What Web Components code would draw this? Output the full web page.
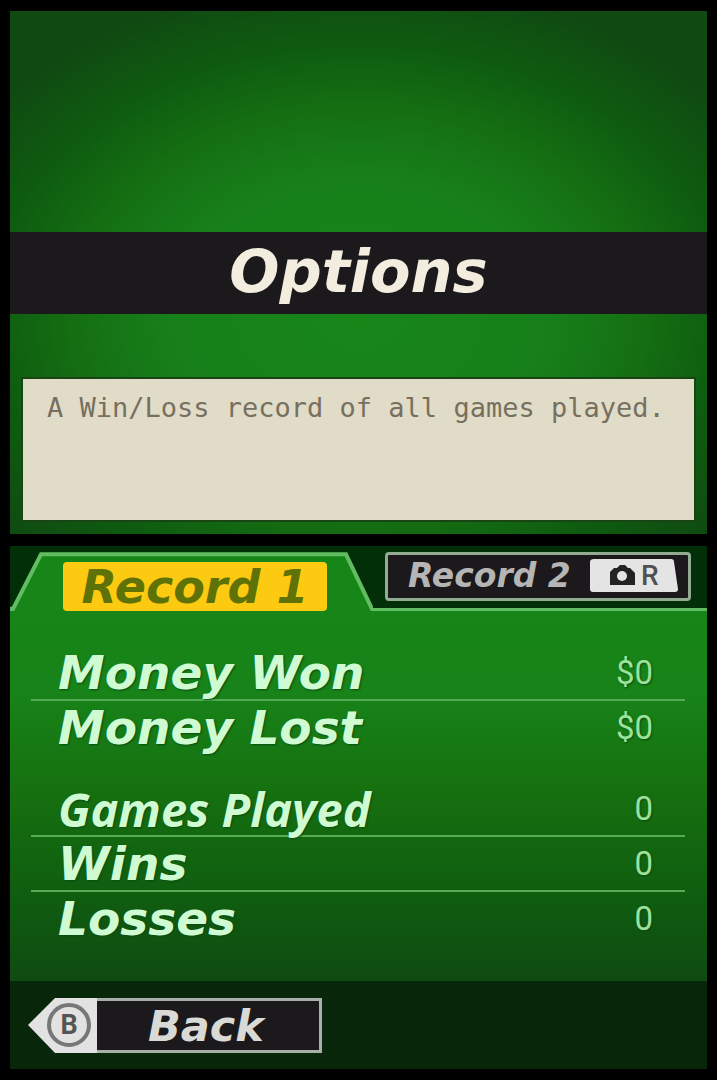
<!DOCTYPE html>
<html lang="en">
<head>
<meta charset="utf-8">
<meta name="viewport" content="width=device-width, initial-scale=1">
<title>Options</title>
<style>
    body {
        margin: 0;
        background: #000;
        font-family: "DejaVu Sans", Verdana, sans-serif;
    }
</style>
</head>
<body>

<dual-screen>
    <info-screen slot="top" heading="Options">A Win/Loss record of all games played.</info-screen>
    <record-screen slot="bottom">
        <record-tab slot="tabs" active>Record 1</record-tab>
        <record-tab slot="tabs">Record 2</record-tab>
        <score-table>
            <score-entry label="Money Won" value="$0"></score-entry>
            <score-entry label="Money Lost" value="$0"></score-entry>
        </score-table>
        <score-table>
            <score-entry label="Games Played" value="0" narrow></score-entry>
            <score-entry label="Wins" value="0"></score-entry>
            <score-entry label="Losses" value="0"></score-entry>
        </score-table>
        <back-button slot="footer">Back</back-button>
    </record-screen>
</dual-screen>

<script>
class DualScreen extends HTMLElement {
    constructor() {
        super();
        const shadowRoot = this.attachShadow({ mode: 'open' });
        shadowRoot.innerHTML = `
            <style>
                :host {
                    display: grid;
                    grid-template-rows: 1fr 1fr;
                    gap: 12px;
                    box-sizing: border-box;
                    min-height: 100vh;
                    padding: 11px 10px;
                }
            </style>
            <slot name="top"></slot>
            <slot name="bottom"></slot>
            `;
    }
}

class InfoScreen extends HTMLElement {
    constructor() {
        super();
        const shadowRoot = this.attachShadow({ mode: 'open' });
        shadowRoot.innerHTML = `
            <style>
                :host {
                    display: flex;
                    flex-direction: column;
                    justify-content: flex-end;
                    background: radial-gradient(ellipse 60% 58% at 50% 58%,
                        #178619 0%, #17801a 45%, #156f12 68%, #0e5c10 88%, #104a12 110%);
                }
                h1 {
                    margin: 0 0 65px;
                    padding: 2px 0 4px;
                    background: #1b191b;
                    color: #f3eddf;
                    font-size: 59px;
                    font-style: italic;
                    line-height: 76px;
                    text-align: center;
                }
                p {
                    min-height: 125px;
                    margin: 0 13px 14px;
                    padding: 13px 8px 3px 24px;
                    background: #e1dcc8;
                    outline: 2px solid #194514;
                    color: #77705f;
                    font-family: "DejaVu Sans Mono", monospace;
                    font-size: 27px;
                    line-height: 32px;
                }
            </style>
            <h1></h1>
            <p><slot></slot></p>
            `;
    }

    connectedCallback() {
        this.shadowRoot.querySelector('h1').textContent = this.getAttribute('heading');
    }
}

class RecordScreen extends HTMLElement {
    constructor() {
        super();
        const shadowRoot = this.attachShadow({ mode: 'open' });
        shadowRoot.innerHTML = `
            <style>
                :host {
                    display: flex;
                    flex-direction: column;
                    background: linear-gradient(#178618 0, #178318 28%, #16700f 47%, #0f5c10 68%, #104a12 84%);
                }
                nav {
                    display: grid;
                    grid-template-columns: 363fr 334fr;
                    height: 63px;
                    background: #022f08;
                }
                main {
                    display: flex;
                    flex: 1;
                    flex-direction: column;
                    gap: 28px;
                    padding: 37px 22px 31px 21px;
                }
                footer {
                    padding: 17px 18px 16px;
                    background: #08260a;
                }
            </style>
            <nav><slot name="tabs"></slot></nav>
            <main><slot></slot></main>
            <footer><slot name="footer"></slot></footer>
            `;
    }
}

class RecordTab extends HTMLElement {
    constructor() {
        super();
        const shadowRoot = this.attachShadow({ mode: 'open' });
        shadowRoot.innerHTML = `
            <style>
                :host {
                    display: flex;
                    position: relative;
                    box-sizing: border-box;
                    align-items: flex-start;
                    padding: 6px 16px 0 12px;
                    border-bottom: 3px solid #62bd62;
                }
                :host([active]) {
                    padding: 16px 46px 0 53px;
                    border-bottom: 0;
                }
                .outline {
                    display: none;
                    position: absolute;
                    inset: 0;
                    width: 100%;
                    height: 100%;
                }
                :host([active]) .outline {
                    display: block;
                }
                button {
                    display: flex;
                    position: relative;
                    flex: 1;
                    box-sizing: border-box;
                    align-items: center;
                    justify-content: space-between;
                    height: 49px;
                    padding: 0 10px 2px 20px;
                    border: 3px solid #91ac93;
                    border-radius: 4px;
                    background: #1b191b;
                    color: #b5b5b5;
                    font: italic bold 33px "DejaVu Sans", Verdana, sans-serif;
                    white-space: nowrap;
                }
                :host([active]) button {
                    justify-content: center;
                    padding: 0;
                    border: 0;
                    background: #fdca12;
                    color: #5f7206;
                    font-size: 46px;
                }
                .key {
                    width: 88px;
                    height: 33px;
                }
                :host([active]) .key {
                    display: none;
                }
            </style>
            <svg class="outline" viewBox="0 0 363 63" preserveAspectRatio="none" aria-hidden="true">
                <path d="M0 63V61H3L31 8H336L362 61H363V63Z" fill="#178618"/>
                <path d="M0 61H3L31 8H336L362 61H363" fill="none" stroke="#62bd62" stroke-width="4"/>
            </svg>
            <button type="button">
                <slot></slot>
                <svg class="key" viewBox="0 0 88 33" aria-hidden="true">
                    <path d="M4 0H81Q84 0 84 3L88 30Q88 33 85 33H3Q0 33 0 30V3Q0 0 4 0Z" fill="#e4e4e4"/>
                    <path d="M20 26V13L24 9H27L30 6H35L38 9H40L45 14V26Z" fill="#222"/>
                    <circle cx="32" cy="17" r="5" fill="#e4e4e4"/>
                    <text x="51" y="26" fill="#505050" font-family="Roboto, sans-serif" font-size="28" font-style="normal" font-weight="500">R</text>
                </svg>
            </button>
            `;
    }
}

class ScoreTable extends HTMLElement {
    constructor() {
        super();
        const shadowRoot = this.attachShadow({ mode: 'open' });
        shadowRoot.innerHTML = `
            <style>
                :host {
                    display: block;
                }
                table {
                    width: 100%;
                    border-collapse: collapse;
                }
                tr + tr {
                    border-top: 2px solid #55ac55;
                }
                th, td {
                    height: 53px;
                    padding: 0;
                    line-height: 48px;
                    text-shadow: 1px 1px 2px #0b4a12;
                }
                th {
                    padding-left: 27px;
                    color: #cffbd2;
                    font-size: 47px;
                    font-style: italic;
                    text-align: left;
                }
                th.narrow {
                    font-family: "Open Sans", "Noto Sans", sans-serif;
                }
                td {
                    padding-right: 32px;
                    color: #9be29b;
                    font-family: Roboto, sans-serif;
                    font-size: 33px;
                    text-align: right;
                }
            </style>
            <table><tbody></tbody></table>
            `;
    }

    connectedCallback() {
        const body = this.shadowRoot.querySelector('tbody');
        body.textContent = '';
        this.querySelectorAll('score-entry').forEach((entry) => {
            const row = body.insertRow();
            const label = document.createElement('th');
            label.scope = 'row';
            label.textContent = entry.getAttribute('label');
            label.classList.toggle('narrow', entry.hasAttribute('narrow'));
            row.append(label);
            row.insertCell().textContent = entry.getAttribute('value');
        });
    }
}

class BackButton extends HTMLElement {
    constructor() {
        super();
        const shadowRoot = this.attachShadow({ mode: 'open' });
        shadowRoot.innerHTML = `
            <style>
                :host {
                    display: flex;
                }
                button {
                    display: flex;
                    padding: 0;
                    border: 0;
                    background: none;
                    color: #d9d9d6;
                    font: italic bold 43px "DejaVu Sans", Verdana, sans-serif;
                }
                svg {
                    width: 69px;
                    height: 55px;
                }
                .label {
                    box-sizing: border-box;
                    width: 225px;
                    height: 55px;
                    padding-right: 4px;
                    border: 3px solid #a9b0a9;
                    border-left: 0;
                    background: #1b191b;
                    line-height: 50px;
                    text-align: center;
                }
            </style>
            <button type="button">
                <svg viewBox="0 0 69 55" aria-hidden="true">
                    <path d="M0 27L27 0H69V55H27Z" fill="#e2e2e2"/>
                    <circle cx="41" cy="27" r="20" fill="none" stroke="#777" stroke-width="4"/>
                    <text x="41" y="36" fill="#555" text-anchor="middle" font-family="Roboto, sans-serif" font-size="27" font-style="normal" font-weight="700">B</text>
                </svg>
                <span class="label"><slot></slot></span>
            </button>
            `;
    }
}

customElements.define('dual-screen', DualScreen);
customElements.define('info-screen', InfoScreen);
customElements.define('record-screen', RecordScreen);
customElements.define('record-tab', RecordTab);
customElements.define('score-table', ScoreTable);
customElements.define('back-button', BackButton);
</script>
</body>
</html>
